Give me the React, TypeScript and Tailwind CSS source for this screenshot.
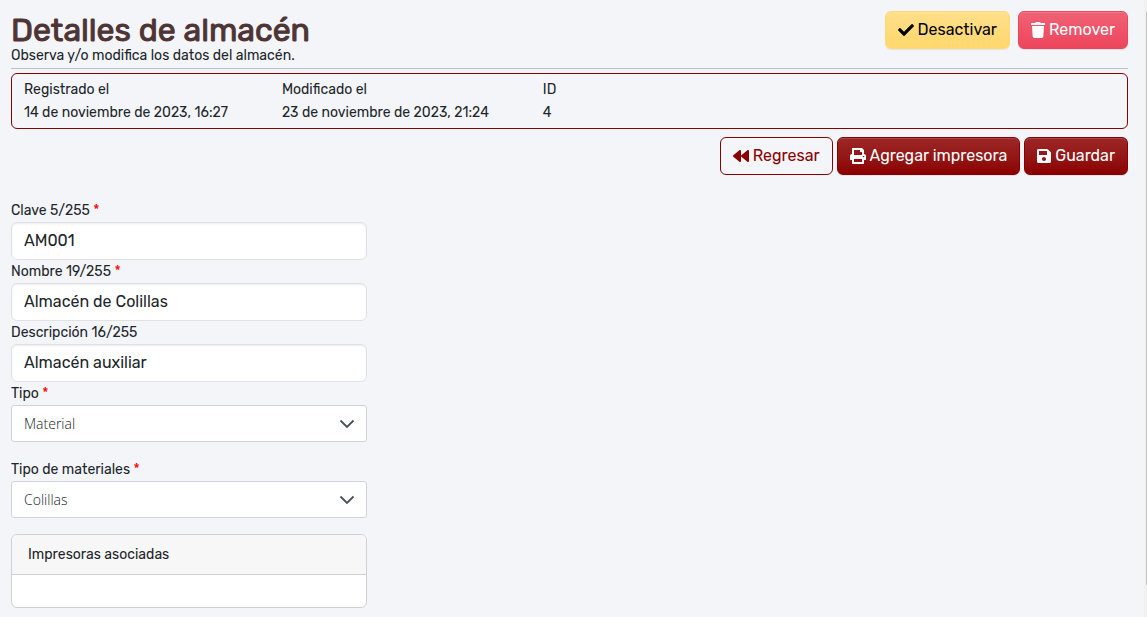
import { useState } from "react";
import type { ReactNode } from "react";
import { FaCheck, FaBackward, FaPrint, FaSave, FaTrash } from "react-icons/fa";

const raised = "shadow-[inset_0_1px_0_rgba(255,255,255,0.15),0_1px_1px_rgba(0,0,0,0.075)]";
const buttonBase = "flex h-[38px] items-center justify-center gap-1 rounded-md border px-3 text-[16px] leading-6";

function Required() {
  return <span className="text-[#ff0000]"> *</span>;
}

function TextField({ id, label, initial, required }: { id: string; label: string; initial: string; required?: boolean }) {
  const [value, setValue] = useState(initial);
  return (
    <div>
      <label htmlFor={id} className="block text-[14px] leading-[23px]">
        {label} {value.length}/255
        {required && <Required />}
      </label>
      <input
        id={id}
        type="text"
        value={value}
        maxLength={255}
        onChange={(e) => setValue(e.target.value)}
        className="block h-[38px] w-full rounded-md border border-[#dee2e6] bg-white px-3 pb-[2px] text-[16px] shadow-[inset_0_1px_2px_rgba(0,0,0,0.075)] outline-none"
      />
    </div>
  );
}

function SelectField({ id, label, options }: { id: string; label: string; options: string[] }) {
  return (
    <div className="mb-4">
      <label htmlFor={id} className="block text-[14px] leading-[23px]">
        {label}
        <Required />
      </label>
      <div className="relative">
        <select
          id={id}
          className="block h-[37px] w-full appearance-none rounded-[3px] border border-[#ced4da] bg-white px-3 font-['Open_Sans',sans-serif] text-[14px] font-light text-[#212529] outline-none"
        >
          {options.map((o) => (
            <option key={o}>{o}</option>
          ))}
        </select>
        <svg className="pointer-events-none absolute top-[11px] right-3 size-4" viewBox="0 0 16 16" fill="none" stroke="#495057" strokeWidth="1.8">
          <path d="M1.5 4.5 8 11 14.5 4.5" />
        </svg>
      </div>
    </div>
  );
}

function Detail({ label, children }: { label: string; children: ReactNode }) {
  return (
    <div>
      <dt>{label}</dt>
      <dd>{children}</dd>
    </div>
  );
}

export default function App() {
  return (
    <div className="flex min-h-screen bg-[#f3f5f9] font-[Rubik,Roboto,sans-serif] text-[#212529]">
      <main className="min-w-0 flex-1 pt-[11px] pr-4 pb-2 pl-[11px]">
        <header className="flex items-start justify-between border-b border-[#c0c1c6] pb-[3px]">
          <div>
            <h1 className="text-[32px] leading-[38px] font-normal text-[#4e3434] [-webkit-text-stroke:1px_#4e3434]">Detalles de almacén</h1>
            <p className="h-4 text-[14px] leading-[14px]">Observa y/o modifica los datos del almacén.</p>
          </div>
          <div className="flex gap-2">
            <button type="button" className={`${buttonBase} ${raised} border-[#ffda75] bg-linear-to-b from-[#ffdf89] to-[#ffd76c] text-black`}>
              <FaCheck />
              Desactivar
            </button>
            <button type="button" className={`${buttonBase} ${raised} border-[#ed455c] bg-linear-to-b from-[#f06175] to-[#ed455c] text-white`}>
              <FaTrash className="h-4 w-[14px]" />
              Remover
            </button>
          </div>
        </header>

        <dl className="mt-1 flex gap-[54px] rounded-md border border-[#8b0000] px-3 py-1 text-[14px] leading-[23px]">
          <Detail label="Registrado el">14 de noviembre de 2023, 16:27</Detail>
          <Detail label="Modificado el">23 de noviembre de 2023, 21:24</Detail>
          <Detail label="ID">4</Detail>
        </dl>

        <div className="mt-2 flex justify-end gap-1">
          <a href="#almacenes" className={`${buttonBase} border-[#8b0000] text-[#8b0000]`}>
            <FaBackward />
            Regresar
          </a>
          <button type="button" className={`${buttonBase} ${raised} border-[#8b0000] bg-linear-to-b from-[#9c2626] to-[#8b0000] text-white`}>
            <FaPrint />
            Agregar impresora
          </button>
          <button type="submit" form="almacen" className={`${buttonBase} ${raised} border-[#8b0000] bg-linear-to-b from-[#9c2626] to-[#8b0000] text-white`}>
            <FaSave className="h-4 w-[14px]" />
            Guardar
          </button>
        </div>

        <form id="almacen" onSubmit={(e) => e.preventDefault()} className="mt-6 grid grid-cols-3 gap-6">
          <div>
            <TextField id="clave" label="Clave" initial="AM001" required />
            <TextField id="nombre" label="Nombre" initial="Almacén de Colillas" required />
            <TextField id="descripcion" label="Descripción" initial="Almacén auxiliar" />
            <SelectField id="tipo" label="Tipo" options={["Material"]} />
            <SelectField id="materiales" label="Tipo de materiales" options={["Colillas"]} />
            <section className="overflow-hidden rounded-md border border-[#ced0d3] bg-white">
              <h2 className="border-b border-[#ced0d3] bg-[#f7f7f7] px-4 py-2 text-[14px] leading-[23px]">Impresoras asociadas</h2>
              <div className="h-8" />
            </section>
          </div>
        </form>
      </main>
      <div className="flex w-[3px] justify-end bg-[#f1f1f1] pt-3 pb-8">
        <div className="w-px bg-[#c1c1c1]" />
      </div>
    </div>
  );
}
